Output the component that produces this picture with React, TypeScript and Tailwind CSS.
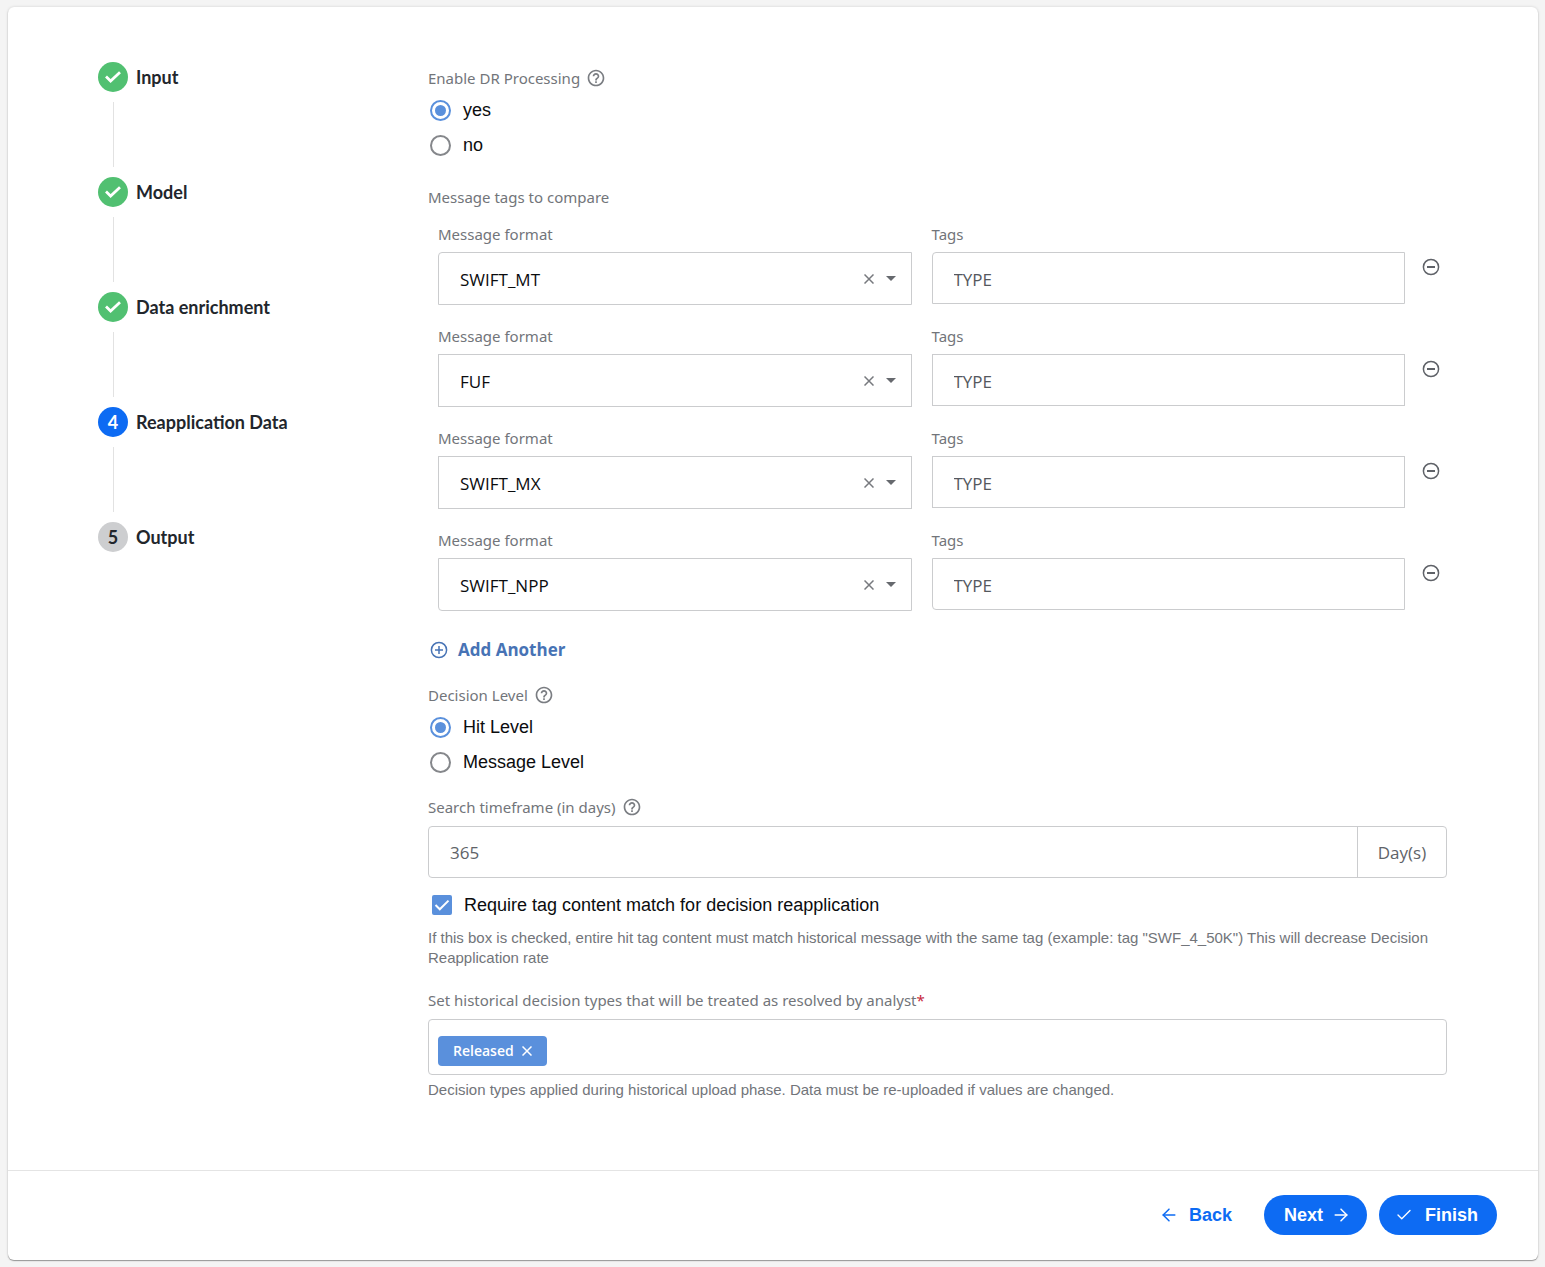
import React, { useState } from 'react'
import { ArrowLeft, ArrowRight, Check } from 'lucide-react'
import { MdHelpOutline } from 'react-icons/md'

type StepState = 'done' | 'current' | 'upcoming'

const steps: { label: string; state: StepState }[] = [
  { label: 'Input', state: 'done' },
  { label: 'Model', state: 'done' },
  { label: 'Data enrichment', state: 'done' },
  { label: 'Reapplication Data', state: 'current' },
  { label: 'Output', state: 'upcoming' },
]

const formats = ['SWIFT_MT', 'FUF', 'SWIFT_MX', 'SWIFT_NPP']

const circleStyles: Record<StepState, string> = {
  done: 'bg-[#51c071] text-white',
  current: 'bg-[#0d6bf3] text-white',
  upcoming: 'bg-[#cdced0] text-[#22262c]',
}

function Stepper() {
  return (
    <ol className="w-[330px] shrink-0 font-['Lato',sans-serif]">
      {steps.map((step, i) => (
        <li key={step.label}>
          <div className="flex items-center gap-2">
            <span
              className={`flex size-[30px] items-center justify-center rounded-full text-lg font-bold ${circleStyles[step.state]}`}
            >
              {step.state === 'done' ? (
                <svg className="h-3 w-4" viewBox="0 0 16 12" fill="none" stroke="currentColor" strokeWidth="2.8">
                  <path d="M1 5.6 5.6 10 15 1.2" />
                </svg>
              ) : (
                i + 1
              )}
            </span>
            <span className="text-lg font-bold text-[#22262c]">{step.label}</span>
          </div>
          {i < steps.length - 1 && <div className="my-2.5 ml-[15px] h-[65px] w-px bg-[#e2e2e2]" />}
        </li>
      ))}
    </ol>
  )
}

function Hint({ label }: { label: string }) {
  return (
    <button type="button" aria-label={label} className="text-[#7a7d82]">
      <MdHelpOutline size={20} />
    </button>
  )
}

interface RadioGroupProps {
  name: string
  legend: string
  options: string[]
}

function RadioGroup({ name, legend, options }: RadioGroupProps) {
  const [value, setValue] = useState(options[0])

  return (
    <div role="radiogroup" aria-labelledby={`${name}-legend`}>
      <div className="flex h-6 items-center gap-1.5">
        <span id={`${name}-legend`}>{legend}</span>
        <Hint label={`About ${legend}`} />
      </div>
      <div className="mt-[3px] font-['Liberation_Sans',sans-serif] text-lg text-[#0b0c0e]">
        {options.map((option) => (
          <label key={option} className="flex h-[35px] items-center gap-3 pl-0.5">
            <input
              type="radio"
              name={name}
              checked={value === option}
              onChange={() => setValue(option)}
              className="size-[21px] appearance-none rounded-full border-2 border-[#85878b] bg-white bg-clip-content p-[3px] checked:border-[#5a90dc] checked:bg-[#5a90dc]"
            />
            <span className="pb-0.5">{option}</span>
          </label>
        ))}
      </div>
    </div>
  )
}

function CloseIcon({ className }: { className: string }) {
  return (
    <svg className={className} viewBox="0 0 10 10" fill="none" stroke="currentColor" strokeWidth="1.5">
      <path d="M.5.5l9 9M9.5.5l-9 9" />
    </svg>
  )
}

function TagRow({ format, index }: { format: string; index: number }) {
  const isFirst = index === 0
  const isLast = index === formats.length - 1
  const corners = `${isFirst ? 'rounded-tl' : ''} ${isLast ? 'rounded-bl' : ''}`

  return (
    <div className="flex pr-[7px] pl-2.5">
      <div className="flex-1">
        <label htmlFor={`format-${index}`} className="block h-6 leading-6">
          Message format
        </label>
        <div className={`mt-1.5 flex h-[53px] items-center border border-[#cbccce] pr-[15px] ${corners}`}>
          <select
            id={`format-${index}`}
            defaultValue={format}
            className="h-full flex-1 appearance-none bg-transparent pt-0.5 pl-[21px] font-['Open_Sans',sans-serif] text-[17px] text-[#0b0c0e] outline-none"
          >
            {formats.map((f) => (
              <option key={f}>{f}</option>
            ))}
          </select>
          <button type="button" aria-label="Clear message format" className="mr-3 text-[#77797e]">
            <CloseIcon className="size-2.5" />
          </button>
          <svg className="h-[5px] w-2.5 text-[#66696e]" viewBox="0 0 10 5" fill="currentColor">
            <path d="M0 0h10L5 5z" />
          </svg>
        </div>
      </div>
      <div className="ml-5 flex-1">
        <label htmlFor={`tags-${index}`} className="block h-6 leading-6">
          Tags
        </label>
        <input
          id={`tags-${index}`}
          type="text"
          defaultValue="TYPE"
          className={`mt-1.5 block h-[52px] w-full border border-[#cbccce] px-[21px] pt-0.5 font-['Open_Sans',sans-serif] text-[17px] text-[#55585d] outline-none ${corners}`}
        />
      </div>
      <button type="button" aria-label="Remove row" className="mt-9 ml-[17px] size-[18px] text-[#5f6268]">
        <svg viewBox="0 0 18 18" fill="none" stroke="currentColor" strokeWidth="1.5">
          <circle cx="9" cy="9" r="7.6" />
          <path d="M5 9h8" strokeWidth="2" />
        </svg>
      </button>
    </div>
  )
}

export default function App() {
  return (
    <div className="min-h-screen bg-[#f4f4f4] pt-[7px] pr-[7px] pb-[7px] pl-2">
      <div className="rounded-md bg-white shadow-[0_1px_1px_rgba(0,0,0,0.35),0_0_3px_rgba(0,0,0,0.15)]">
        <div className="flex pt-[55px] pr-[91px] pb-[70px] pl-[90px]">
          <Stepper />

          <form className="min-w-0 flex-1 pt-1 font-['Noto_Sans',sans-serif] text-[15px] text-[#72757a]">
            <RadioGroup name="dr-processing" legend="Enable DR Processing" options={['yes', 'no']} />

            <h2 className="mt-[22px] leading-6">Message tags to compare</h2>
            <div className="mt-[13px] flex flex-col gap-[19px]">
              {formats.map((format, i) => (
                <TagRow key={format} format={format} index={i} />
              ))}
            </div>

            <button
              type="button"
              className="mt-[27px] mb-[21px] flex h-6 items-center gap-2.5 pl-0.5 font-['Open_Sans',sans-serif] text-[17px] font-bold text-[#4773b5]"
            >
              <svg className="size-[18px]" viewBox="0 0 18 18" fill="none" stroke="currentColor" strokeWidth="1.5">
                <circle cx="9" cy="9" r="7.6" />
                <path d="M5 9h8M9 5v8" />
              </svg>
              Add Another
            </button>

            <RadioGroup name="decision-level" legend="Decision Level" options={['Hit Level', 'Message Level']} />

            <div className="mt-[15px] flex h-6 items-center gap-1.5">
              <label htmlFor="timeframe">Search timeframe (in days)</label>
              <Hint label="About search timeframe" />
            </div>
            <div className="mt-[7px] flex h-[52px] rounded border border-[#cbccce] font-['Open_Sans',sans-serif] text-[17px] text-[#606368]">
              <input
                id="timeframe"
                type="text"
                defaultValue="365"
                className="min-w-0 flex-1 px-[21px] pt-0.5 outline-none"
              />
              <span className="flex w-[89px] items-center justify-center border-l border-[#cbccce] pt-0.5">
                Day(s)
              </span>
            </div>

            <label className="mt-[15px] flex h-6 items-center gap-3 pl-1 font-['Liberation_Sans',sans-serif] text-lg text-[#0b0c0e]">
              <span className="grid size-5 place-items-center">
                <input
                  type="checkbox"
                  defaultChecked
                  className="peer col-start-1 row-start-1 size-5 appearance-none rounded-xs border-2 border-[#85878b] checked:border-0 checked:bg-[#5a90dc]"
                />
                <svg
                  className="pointer-events-none col-start-1 row-start-1 hidden h-3 w-4 text-white peer-checked:block"
                  viewBox="0 0 16 12"
                  fill="none"
                  stroke="currentColor"
                  strokeWidth="2"
                >
                  <path d="M1.5 6 5.8 10.3 14.5 1.6" />
                </svg>
              </span>
              Require tag content match for decision reapplication
            </label>
            <p className="mt-[11px] font-['Liberation_Sans',sans-serif] leading-5">
              If this box is checked, entire hit tag content must match historical message with the same tag (example:
              tag "SWF_4_50K") This will decrease Decision Reapplication rate
            </p>

            <h2 className="mt-5 leading-6">
              Set historical decision types that will be treated as resolved by analyst
              <span className="text-[#c8283c]">*</span>
            </h2>
            <div className="mt-[7px] flex h-14 items-end rounded border border-[#cbccce] px-[9px] pb-2">
              <span className="flex h-[30px] items-center gap-2 rounded bg-[#5a90dc] px-[15px] font-['Open_Sans',sans-serif] text-sm font-semibold text-white">
                Released
                <button type="button" aria-label="Remove Released">
                  <CloseIcon className="size-2.5" />
                </button>
              </span>
            </div>
            <p className="mt-[5px] font-['Liberation_Sans',sans-serif] leading-5">
              Decision types applied during historical upload phase. Data must be re-uploaded if values are changed.
            </p>
          </form>
        </div>

        <footer className="flex items-center justify-end border-t border-[#e4e4e4] pt-6 pr-[41px] pb-[25px] font-['Liberation_Sans',sans-serif] text-lg font-bold">
          <button type="button" className="mr-8 flex h-10 items-center gap-2.5 text-[#0d6bf3]">
            <ArrowLeft size={20} strokeWidth={1.8} />
            Back
          </button>
          <button
            type="button"
            className="mr-3 flex h-10 items-center gap-2 rounded-full bg-[#0d6bf3] pr-4 pl-5 text-white"
          >
            Next
            <ArrowRight size={20} strokeWidth={1.8} />
          </button>
          <button
            type="button"
            className="flex h-10 items-center gap-3 rounded-full bg-[#0d6bf3] pr-[19px] pl-4 text-white"
          >
            <Check size={18} strokeWidth={1.8} />
            Finish
          </button>
        </footer>
      </div>
    </div>
  )
}
